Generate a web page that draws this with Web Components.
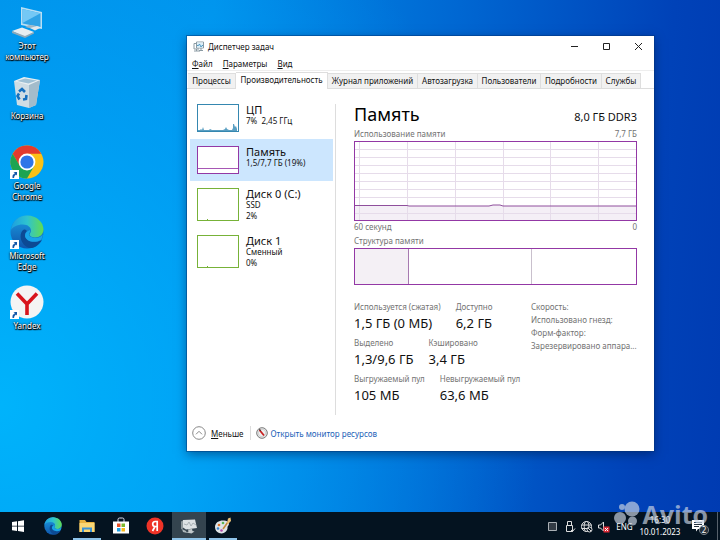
<!DOCTYPE html>
<html lang="ru">
<head>
<meta charset="utf-8">
<title>Диспетчер задач</title>
<style>
html,body{margin:0;height:100%}
body{font:8px/11px "Noto Sans","Open Sans",sans-serif;color:#111;overflow:hidden}
</style>
</head>
<body>
<win-desktop>
  <desk-icon slot="icons" label="Этот компьютер" icon="pc"></desk-icon>
  <desk-icon slot="icons" label="Корзина" icon="bin"></desk-icon>
  <desk-icon slot="icons" label="Google Chrome" icon="chrome" shortcut></desk-icon>
  <desk-icon slot="icons" label="Microsoft Edge" icon="edge" shortcut></desk-icon>
  <desk-icon slot="icons" label="Yandex" icon="yandex" shortcut></desk-icon>

  <task-window slot="window" caption="Диспетчер задач">
    <perf-item slot="list" name="ЦП" kind="cpu"><span>7%&nbsp; 2,45 ГГц</span></perf-item>
    <perf-item slot="list" name="Память" kind="mem" selected><span>1,5/7,7 ГБ (19%)</span></perf-item>
    <perf-item slot="list" name="Диск 0 (C:)" kind="disk"><span>SSD</span><span>2%</span></perf-item>
    <perf-item slot="list" name="Диск 1" kind="disk"><span>Сменный</span><span>0%</span></perf-item>
    <memory-view slot="detail"></memory-view>
  </task-window>

  <task-bar slot="bar"></task-bar>
</win-desktop>

<script>
const define = (name, html, setup) => {
  const t = document.createElement('template');
  t.innerHTML = html;
  customElements.define(name, class extends HTMLElement {
    constructor() {
      super();
      this.attachShadow({ mode: 'open' }).append(t.content.cloneNode(true));
    }
    connectedCallback() { if (setup) setup(this, this.shadowRoot); }
  });
};

let uid = 0;
const edge = () => {
  const a = 'e' + (uid++);
  return `<svg viewBox="0 0 34 34"><defs>
  <linearGradient id="${a}g" x1="0" y1=".3" x2="1" y2=".3"><stop offset="0" stop-color="#1c9fe0"/><stop offset=".5" stop-color="#2fc3cf"/><stop offset="1" stop-color="#62dc50"/></linearGradient>
  <linearGradient id="${a}b" x1="0" y1="0" x2="0" y2="1"><stop offset="0" stop-color="#1b9de2"/><stop offset="1" stop-color="#0f55ab"/></linearGradient></defs>
  <circle cx="17" cy="17" r="16.500" fill="url(#${a}b)"/>
  <path d="M1 15C2 6 9 .500 17 .500c10 0 16.500 7 16.500 14 0 5-4 8-8.500 8-3.500 0-5.500-1.500-5.500-3 0-1 1.500-1.500 1.500-4 0-3-3-6-8-6C7 9.500 2.500 12 1 15z" fill="url(#${a}g)"/>
  <path d="M13 15c-5 5-2 15 6 18 6 .500 10-3 13-8-7 4-16 1-17-4-.500-2.500 1-4 2-5-1-1.500-3-2-4-1z" fill="#0c4a94"/>
  <path d="M20 15c1 2-1.500 3-1 5 .700 2 4 3 7 2.800 3.500-.200 5.500-1.600 6.800-3.500-.300 3-1 4.500-1.800 5.700-7 4-15.500 1-16-4-.200-3 2-5 5-6z" fill="#18a4e8"/></svg>`;
};

const icons = {
  pc: () => `<svg viewBox="0 0 34 34"><path d="M11 2l21 5v17l-21-4z" fill="#b9dff4"/><path d="M12.500 4l18 4.300v13.700l-18-3.500z" fill="#2fa3e6"/><path d="M12.500 4l18 4.300-18 9.700z" fill="#74c8f5"/><path d="M15 22l9 2 3-3-8-1z" fill="#9fb5c2"/><path d="M2 26l10-3.500 12 4.500-9 5z" fill="#e6edf1"/><path d="M2 26l13 5 9-4v1.500l-9 4.500L2 28z" fill="#8fa9b8"/><path d="M20 23l7-2 4 1.500-6 3z" fill="#dfe8ed"/></svg>`,
  bin: () => `<svg viewBox="0 0 34 34"><path d="M4 6l26-1-4 25-7 3-12-3z" fill="#cfdde4"/><path d="M19 9l11-4-4 25-7 3z" fill="#a3bccb"/><path d="M4 6l10-4 16 3-11 5z" fill="#e9f0f3"/><path d="M7 6l8-2.500 12 2-8.500 3z" fill="#9fc1d5"/><g fill="none" stroke="#1470bf" stroke-width="2.600"><path d="M9 16.500l3-2.500 3 3"/><path d="M16.500 20l-.500 4-3 .500"/><path d="M9.500 24.500L7.500 21l1.500-2.500"/></g></svg>`,
  chrome: () => `<svg viewBox="0 0 34 34"><circle cx="17" cy="17" r="16.500" fill="#fbc116"/><path d="M2.700 8.700A16.500 16.500 0 0 1 31.300 8.700H17l-7.200 12.500z" fill="#e33b2e"/><path d="M2.700 8.700A16.500 16.500 0 0 0 17 33.500l7.200-12.400H9.800z" fill="#1da452"/><circle cx="17" cy="17" r="8.400" fill="#fff"/><circle cx="17" cy="17" r="6.600" fill="#2f75e8"/></svg>`,
  edge,
  yandex: () => `<svg viewBox="0 0 34 34"><circle cx="17" cy="17" r="16.500" fill="#f4f4f4"/><path d="M7 8.500L17 19v11M27 8.500L17 19" fill="none" stroke="#d8141c" stroke-width="3.600"/></svg>`
};

define('win-desktop', `<style>
:host{display:grid;grid-template-rows:1fr auto;min-height:100vh;position:relative;
 background:
  radial-gradient(ellipse 75% 110% at 0% 75%,rgba(0,186,255,.85),rgba(0,176,255,.45) 50%,transparent 100%),
  linear-gradient(95deg,#008ce6 0,#008fea 28%,#0067d2 60%,#0042b8 88%,#003bb2 100%)}
.icons{display:flex;flex-direction:column;gap:11px;width:54px;padding-top:5px;align-items:center}
.win{position:absolute;left:187px;right:66px;top:36px}
</style>
<main class="icons"><slot name="icons"></slot></main>
<div class="win"><slot name="window"></slot></div>
<slot name="bar"></slot>`);

define('desk-icon', `<style>
:host{display:flex;flex-direction:column;align-items:center;color:#fff;text-align:center;min-height:59px}
.pic{position:relative;width:34px;height:34px}
svg{display:block;width:34px;height:34px}
.arrow{position:absolute;left:0;bottom:0;width:9px;height:9px;display:none}
:host([shortcut]) .arrow{display:block}
.label{width:54px;margin-top:1px;line-height:11px;text-shadow:0 1px 1px #000,0 0 2px #000,1px 1px 1px #000}
</style><div class="pic"><span class="art"></span><svg class="arrow" viewBox="0 0 9 9"><path d="M0 0h9v9H0z" fill="#fff"/><path d="M2.500 8V6q0-2 2-2V2.500H4L3.500 2H7v3.500L6 4.500Q4 5.500 4 8z" fill="#1257a8"/></svg></div>
<div class="label"></div>`, (el, r) => {
  r.querySelector('.art').innerHTML = icons[el.getAttribute('icon')]();
  r.querySelector('.label').textContent = el.getAttribute('label');
});

define('task-window', `<style>
:host{display:block;background:#fff;box-shadow:0 0 0 1px rgba(0,50,120,.45),0 3px 10px rgba(0,20,60,.5)}
button{font:inherit;color:inherit;border:0;background:none;padding:0;margin:0}
header{display:flex;align-items:center;height:20px;padding-left:6px}
header .app{width:11px;height:11px;margin-right:4px}
header h1{font:inherit;margin:0;flex:1}
header button{width:32px;height:20px;display:grid;place-items:center}
header button svg{width:9px;height:9px}
menu{display:flex;gap:10px;margin:0;padding:0 5px;height:14px;align-items:center;border-bottom:1px solid #eee}
.tabs{display:grid;grid-template-columns:48fr 92fr 90fr 60fr 63fr 61fr 39fr;padding:0 13px 0 1px;height:17px;align-items:end;border-bottom:1px solid #ddd}
.tabs button{height:15px;line-height:11px;background:#f1f1f1;border:1px solid #dedede;border-left-width:0;border-bottom:0;padding-bottom:1px;white-space:nowrap;text-align:center}
.tabs button[aria-selected=true]{height:17px;margin-bottom:-1px;background:#fff;padding-bottom:3px;z-index:1}
.body{display:grid;grid-template-columns:149fr 318fr;padding-top:8px}
.list{border-right:1px solid #ddd;padding-left:3px;margin:7px 0 0;height:311px}
.list div{margin-top:-7px;padding-right:2px}
.detail{padding:7px 17px 0 18px}
footer{display:flex;align-items:center;height:36px;padding:0 5px}
footer svg{width:14px;height:14px}
footer button{display:flex;align-items:center;gap:5px;padding-right:6px;border-right:1px solid #ddd}
footer a{display:flex;align-items:center;gap:3px;padding-left:5px;color:#1a62b8;text-decoration:none}
footer a svg{width:12px;height:12px}
</style>
<header><svg class="app" viewBox="0 0 11 11"><path d="M3.500 1h7v6h-7zM1 2.500h2M1 2.500v5.500h5M1 10h6M3.500 8v2M6 9.500h4M8 7v2.500" fill="none" stroke="#8a9aa3"/><path d="M4 1.500h6v5H4z" fill="#dceef7"/><path d="M4 4.500h1.500L6.500 3l1.500 3 1-1.500h1" fill="none" stroke="#3287b8" stroke-width=".8"/></svg><h1></h1>
<button aria-label="Свернуть"><svg viewBox="0 0 9 9"><path d="M1 4.500h7" stroke="#222"/></svg></button>
<button aria-label="Развернуть"><svg viewBox="0 0 9 9"><path d="M1.500 1.500h6v6h-6z" fill="none" stroke="#222"/></svg></button>
<button aria-label="Закрыть"><svg viewBox="0 0 9 9"><path d="M1 1l7 7M8 1L1 8" stroke="#222"/></svg></button></header>
<menu><button><u>Ф</u>айл</button><button><u>П</u>араметры</button><button><u>В</u>ид</button></menu>
<div class="tabs" role="tablist"><button role="tab">Процессы</button><button role="tab" aria-selected="true">Производительность</button><button role="tab">Журнал приложений</button><button role="tab">Автозагрузка</button><button role="tab">Пользователи</button><button role="tab">Подробности</button><button role="tab">Службы</button></div>
<section class="body"><div class="list"><div><slot name="list"></slot></div></div><div class="detail"><slot name="detail"></slot></div></section>
<footer><button><svg viewBox="0 0 14 14" fill="none" stroke="#888"><circle cx="7" cy="7" r="6.300"/><path d="M4 8.300l3-3 3 3"/></svg><span><u>М</u>еньше</span></button>
<a href="#"><svg viewBox="0 0 12 12"><circle cx="6" cy="6" r="5.300" fill="#eef0f0" stroke="#777"/><circle cx="6" cy="6" r="3.800" fill="none" stroke="#bbb" stroke-width=".6"/><path d="M3.500 3l4.500 5.500" stroke="#c82020" stroke-width="1.800"/><path d="M3 2.500l2 1" stroke="#333"/></svg>Открыть монитор ресурсов</a></footer>`,
(el, r) => { r.querySelector('h1').textContent = el.getAttribute('caption'); });

const thumbs = {
  cpu: ['#3587b0', 28, '<path d="M1 27v-1h2l1-1 1 1 1-3 1 3h5l1-1 2 1h11l2-1 1-2 1 2 2 1h3l1-2V20h1l1 3 1-1 1 3v2z" fill="#5a9fc2"/>'],
  mem: ['#9338a5', 28, '<path d="M0 22.500h42" stroke="#a757b5" fill="none"/>'],
  disk: ['#77b238', 33, '<path d="M10 31h1v1h-1z" fill="#77b238"/>']
};

define('perf-item', `<style>
:host{display:block}
button{all:unset;box-sizing:border-box;display:flex;gap:7px;width:100%;padding:7px}
:host([selected]) button{background:#cce6fe}
svg{display:block;width:42px;flex:none;background:#fff}
b{font:11px/11px "Noto Sans","Open Sans",sans-serif;display:block;white-space:nowrap}
::slotted(span){display:block;line-height:11px;white-space:nowrap}
.t{height:28px}
</style><button><span class="g"></span><span class="t"><b></b><slot></slot></span></button>`, (el, r) => {
  const [c, h, d] = thumbs[el.getAttribute('kind')];
  r.querySelector('b').textContent = el.getAttribute('name');
  r.querySelector('.g').innerHTML = `<svg viewBox="0 0 42 ${h}" height="${h}">${d}<rect x=".5" y=".5" width="41" height="${h - 1}" fill="none" stroke="${c}"/></svg>`;
});

define('mem-stat', `<style>
:host{display:block;white-space:nowrap}
dt{color:#737373}
dl,dd{margin:0}dt{line-height:12px}dd{font-size:13px;line-height:18px;margin-top:1px;color:#111}
</style><dl><dt></dt><dd></dd></dl>`, (el, r) => {
  r.querySelector('dt').textContent = el.getAttribute('label');
  r.querySelector('dd').textContent = el.getAttribute('value');
});

define('memory-view', `<style>
:host{display:block}
.row{display:flex;justify-content:space-between;align-items:baseline}
.top{height:24px}
.top span{font-size:11px}
h2{font-weight:400;font-size:18px;line-height:20px;margin:0;color:#000}
.cap{color:#737373;line-height:12px;height:13px}
svg{display:block;width:100%}
.chart{height:80px}
.comp{height:37px;margin-bottom:16px}
.mid{margin-top:1px}
.stats{display:grid;grid-template-columns:177fr 106fr}
.rows{display:flex;flex-direction:column;gap:5px}
.rows div{display:flex;gap:15px}
ul{list-style:none;margin:0;padding:0;color:#737373}
li{line-height:12px;margin-bottom:1px;white-space:nowrap}
</style>
<div class="row top"><h2>Память</h2><span>8,0 ГБ DDR3</span></div>
<div class="row cap"><span>Использование памяти</span><span>7,7 ГБ</span></div>
<svg class="chart" viewBox="0 0 283 80" preserveAspectRatio="none">
<path d="M0 64.500h53l2 .5h80l4-1h7l3 1h134V80H0z" fill="#f4eff6"/>
<path d="M0 8.500h283M0 16.500h283M0 24.500h283M0 32.500h283M0 40.500h283M0 48.500h283M0 56.500h283M0 72.500h283M5.500 0v80M53.500 0v80M101.500 0v80M149.500 0v80M196.500 0v80M244.500 0v80" stroke="#e6dcea" fill="none"/>
<path d="M0 64.500h53l2 .5h80l4-1h7l3 1h134" stroke="#8f4f9c" fill="none"/>
<rect x=".5" y=".5" width="282" height="79" fill="none" stroke="#9338a5"/></svg>
<div class="row cap"><span>60 секунд</span><span>0</span></div>
<div class="cap mid">Структура памяти</div>
<svg class="comp" viewBox="0 0 283 37" preserveAspectRatio="none"><path d="M0 0h55v37H0z" fill="#f4f0f5"/><path d="M54.500 0v37" stroke="#a77ab1"/><path d="M177.500 0v37" stroke="#c9c0cd"/><rect x=".5" y=".5" width="282" height="36" fill="none" stroke="#9338a5"/></svg>
<div class="stats"><div class="rows">
<div><mem-stat label="Используется (сжатая)" value="1,5 ГБ (0 МБ)"></mem-stat><mem-stat label="Доступно" value="6,2 ГБ"></mem-stat></div>
<div><mem-stat label="Выделено" value="1,3/9,6 ГБ"></mem-stat><mem-stat label="Кэшировано" value="3,4 ГБ"></mem-stat></div>
<div><mem-stat label="Выгружаемый пул" value="105 МБ"></mem-stat><mem-stat label="Невыгружаемый пул" value="63,6 МБ"></mem-stat></div>
</div><ul><li>Скорость:</li><li>Использовано гнезд:</li><li>Форм-фактор:</li><li>Зарезервировано аппара...</li></ul></div>`);

define('task-bar', `<style>
:host{display:flex;align-items:center;height:28px;background:#041320;color:#fff;position:relative}
button{all:unset;width:34px;height:28px;display:grid;place-items:center;box-sizing:border-box}
button svg{width:18px;height:18px}
nav{display:flex;flex:1;padding-left:2px}
.open{background:linear-gradient(#8fc4ea,#8fc4ea) 50% 100%/28px 2px no-repeat}
.on{background:linear-gradient(#8fc4ea,#8fc4ea) 50% 100%/100% 2px no-repeat,#34444f}
.tray{display:flex;align-items:center}
.tray .i{width:17px}
.tray .i svg{width:13px;height:13px}
.lang{width:25px;text-align:center}
.clock{width:46px;text-align:center;line-height:12px}
.note{width:34px}
.peek{width:3px;height:28px;border-left:1px solid #56616b;box-sizing:border-box}
.mark{position:absolute;right:12px;bottom:9px;display:flex;align-items:center;gap:3px;color:#c9d3e2;opacity:.68;font:700 25px/34px "Open Sans","Noto Sans",sans-serif;pointer-events:none}
.mark svg{width:26px;height:26px}
</style>
<nav>
<button aria-label="Пуск"><svg viewBox="0 0 18 18"><path d="M2 5l5-.7v4.400H2zM8 4.200l6-.9v5.400H8zM2 9.600h5V14l-5-.7zM8 9.600h6V15l-6-.9z" fill="#fff"/></svg></button>
<button aria-label="Microsoft Edge" class="edge"></button>
<button aria-label="Проводник" class="open"><svg viewBox="0 0 18 18"><path d="M1.500 3h5.500l1.500 2h8v10h-15z" fill="#e9b23f"/><path d="M1.500 6h15v9h-15z" fill="#fbd775"/><path d="M4 15v-4.500h10V15h-2v-2.500H6V15z" fill="#3b93d6"/></svg></button>
<button aria-label="Магазин"><svg viewBox="0 0 18 18"><path d="M6 5V2.500Q6 1 7.500 1h3Q12 1 12 2.500V5" fill="none" stroke="#dde"/><path d="M1 4.500h16v12H1z" fill="#fff"/><path d="M5 6.500h3.500V10H5z" fill="#e84f25"/><path d="M9.500 6.500H13V10H9.500z" fill="#7db82d"/><path d="M5 11h3.500v3.500H5z" fill="#1ba0e6"/><path d="M9.500 11H13v3.500H9.500z" fill="#f8b81a"/></svg></button>
<button aria-label="Яндекс"><svg viewBox="0 0 18 18"><circle cx="9" cy="9" r="8.500" fill="#ee3327"/><path d="M11.200 14V4.500H9.300Q6.700 4.700 6.700 7t2.300 2.500h2.200M9 9.500L6.500 14" fill="none" stroke="#fff" stroke-width="1.700"/></svg></button>
<button aria-label="Диспетчер задач" class="on"><svg viewBox="0 0 18 18"><path d="M1 4.500l2-1v8l-2 1z" fill="#8c979b"/><path d="M3 3l12-.500 2 8.500-11 1.500-3-2z" fill="#dde2e4"/><path d="M4 7l3 1 2-3 2 4 2-3 3 2" fill="none" stroke="#a9b2b6"/><path d="M8 12.500l4-.500.500 2 2 .500-3 2-5-1 2-1z" fill="#c3cacd"/><path d="M2 12l4 2 1 2-4-1z" fill="#aeb8bc"/></svg></button>
<button aria-label="Paint" class="open"><svg viewBox="0 0 18 18"><path d="M1 10C1 5 6 3 10 3.500c5 .500 6 4 4 5.500-1 1 0 2-1 4-1.500 3-5 4-8 3-2.500-1-4-3-4-6z" fill="#dfe5e8"/><circle cx="5" cy="8" r="1.300" fill="#e0762c"/><circle cx="9" cy="6" r="1.300" fill="#5ab552"/><circle cx="4" cy="11.500" r="1.300" fill="#3c86d0"/><circle cx="7.500" cy="13.500" r="1.300" fill="#b14ba8"/><path d="M9 12l5-7" stroke="#c58a3c" stroke-width="1.600"/><path d="M13 6l1-4.500 2.500-1L17 4l-3 3z" fill="#ecc275"/></svg></button>
</nav>
<div class="tray">
<button class="i" aria-label="Значок"><svg viewBox="0 0 13 13"><path d="M2.500 2.500h8v8h-8z" fill="#333c46" stroke="#aab0b5"/></svg></button>
<button class="i" aria-label="USB"><svg viewBox="0 0 13 13" fill="none" stroke="#ddd"><path d="M4.500 5V1.500h4V5M3.500 5.500h6v6h-6z"/><path d="M8 10l1.500 1.500L12 8.500"/></svg></button>
<button class="i" aria-label="Сеть"><svg viewBox="0 0 13 13" fill="none" stroke="#ddd"><circle cx="6.500" cy="6.500" r="5"/><ellipse cx="6.500" cy="6.500" rx="2.300" ry="5"/><path d="M1.500 5h10M1.500 8.500h6"/><circle cx="9.500" cy="9.500" r="2.500" fill="#041320"/><path d="M8 8l3 3"/></svg></button>
<button class="i" aria-label="Звук"><svg viewBox="0 0 13 13"><path d="M1.500 5h2l3-3v9l-3-3h-2z" fill="none" stroke="#ddd"/><path d="M6.500 6.500h6v6h-6z" fill="#dc2a36"/><path d="M8 8l3 3M11 8l-3 3" stroke="#fff"/></svg></button>
<span class="lang">ENG</span>
<div class="clock"><div>16:30</div><div>10.01.2023</div></div>
<button class="note" aria-label="Уведомления"><svg viewBox="0 0 18 18"><path d="M1 3h12v9H7l-2 2.500V12H1z" fill="#fff"/><path d="M3 5.500h8M3 7.500h8M3 9.500h5" stroke="#26323d"/><circle cx="13" cy="13" r="4.600" fill="#26303a" stroke="#8b949b" stroke-width=".8"/><text x="13" y="16" text-anchor="middle" font-size="8" fill="#fff">2</text></svg></button>
<span class="peek"></span></div>
<div class="mark"><svg viewBox="0 0 26 26" fill="currentColor"><circle cx="8" cy="6" r="3"/><circle cx="18" cy="8" r="7.500"/><circle cx="6" cy="17" r="6"/><circle cx="18.500" cy="20" r="4.500"/></svg><span>Avito</span></div>`,
(el, r) => { r.querySelector('.edge').innerHTML = edge(); });
</script>
</body>
</html>
